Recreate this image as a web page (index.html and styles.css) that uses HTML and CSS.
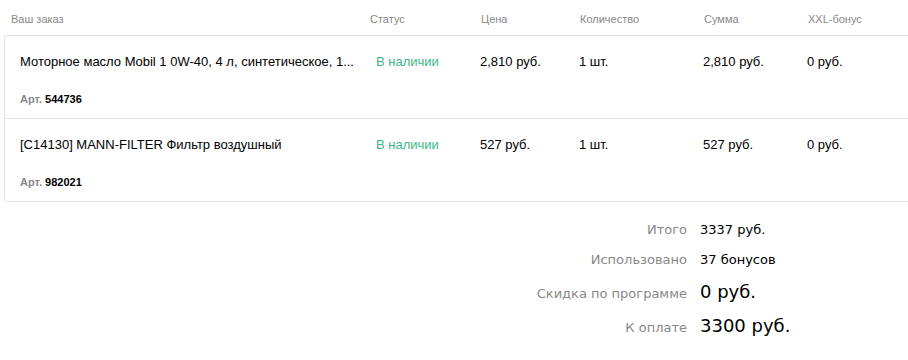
FILE: index.html
```html
<!DOCTYPE html>
<html lang="ru">
<head>
<meta charset="utf-8">
<link rel="stylesheet" href="styles.css">
</head>
<body>
<div class="page">
  <div class="order-head">
    <div>Ваш заказ</div>
    <div>Статус</div>
    <div>Цена</div>
    <div>Количество</div>
    <div>Сумма</div>
    <div>XXL-бонус</div>
  </div>
  <div class="card">
    <div class="row">
      <div class="name-cell">
        <div class="name">Моторное масло Mobil 1 0W-40, 4 л, синтетическое, 1...</div>
        <div class="art"><span class="art-label">Арт.</span> 544736</div>
      </div>
      <div class="status">В наличии</div>
      <div>2,810 руб.</div>
      <div>1 шт.</div>
      <div>2,810 руб.</div>
      <div>0 руб.</div>
    </div>
    <div class="row">
      <div class="name-cell">
        <div class="name">[C14130] MANN-FILTER Фильтр воздушный</div>
        <div class="art"><span class="art-label">Арт.</span> 982021</div>
      </div>
      <div class="status">В наличии</div>
      <div>527 руб.</div>
      <div>1 шт.</div>
      <div>527 руб.</div>
      <div>0 руб.</div>
    </div>
  </div>
  <div class="summary">
    <div class="s-label">Итого</div>
    <div class="s-value">3337 руб.</div>
    <div class="s-label">Использовано</div>
    <div class="s-value">37 бонусов</div>
    <div class="s-label">Скидка по программе</div>
    <div class="s-value big">0 руб.</div>
    <div class="s-label">К оплате</div>
    <div class="s-value big">3300 руб.</div>
  </div>
</div>
</body>
</html>
```

FILE: styles.css
```css
html, body {
  margin: 0;
  padding: 0;
  background: #fff;
  overflow: hidden;
}
body {
  font-family: "Liberation Sans", Arial, sans-serif;
  color: #000;
}
.page {
  width: 908px;
  overflow: hidden;
}
.order-head {
  display: grid;
  grid-template-columns: 359px 111px 99px 124px 104px 1fr;
  padding: 13px 0 0 11px;
  height: 22px;
  font-size: 11px;
  line-height: 13px;
  color: #888;
}
.card {
  margin-left: 4px;
  width: 940px;
  border: 1px solid #e3e3e3;
  border-radius: 3px;
}
.row {
  display: grid;
  grid-template-columns: 356px 104px 99px 124px 104px 1fr;
  padding: 18px 0 12px 15px;
  font-size: 13px;
  line-height: 16px;
  align-items: start;
}
.row + .row {
  border-top: 1px solid #e3e3e3;
}
.name-cell {
  min-width: 0;
}
.name {
  white-space: nowrap;
}
.art {
  margin-top: 23px;
  font-size: 11px;
  line-height: 13px;
  font-weight: bold;
}
.art-label {
  color: #888;
}
.status {
  color: #3db68a;
}
.summary {
  display: grid;
  grid-template-columns: 687px auto;
  column-gap: 13px;
  align-items: baseline;
  margin-top: 13px;
  font-family: "DejaVu Sans", sans-serif;
  font-size: 13px;
}
.s-label {
  text-align: right;
  color: #888;
  line-height: 30px;
}
.s-value {
  line-height: 30px;
}
.s-value.big {
  font-size: 18px;
  line-height: 33px;
}
```
